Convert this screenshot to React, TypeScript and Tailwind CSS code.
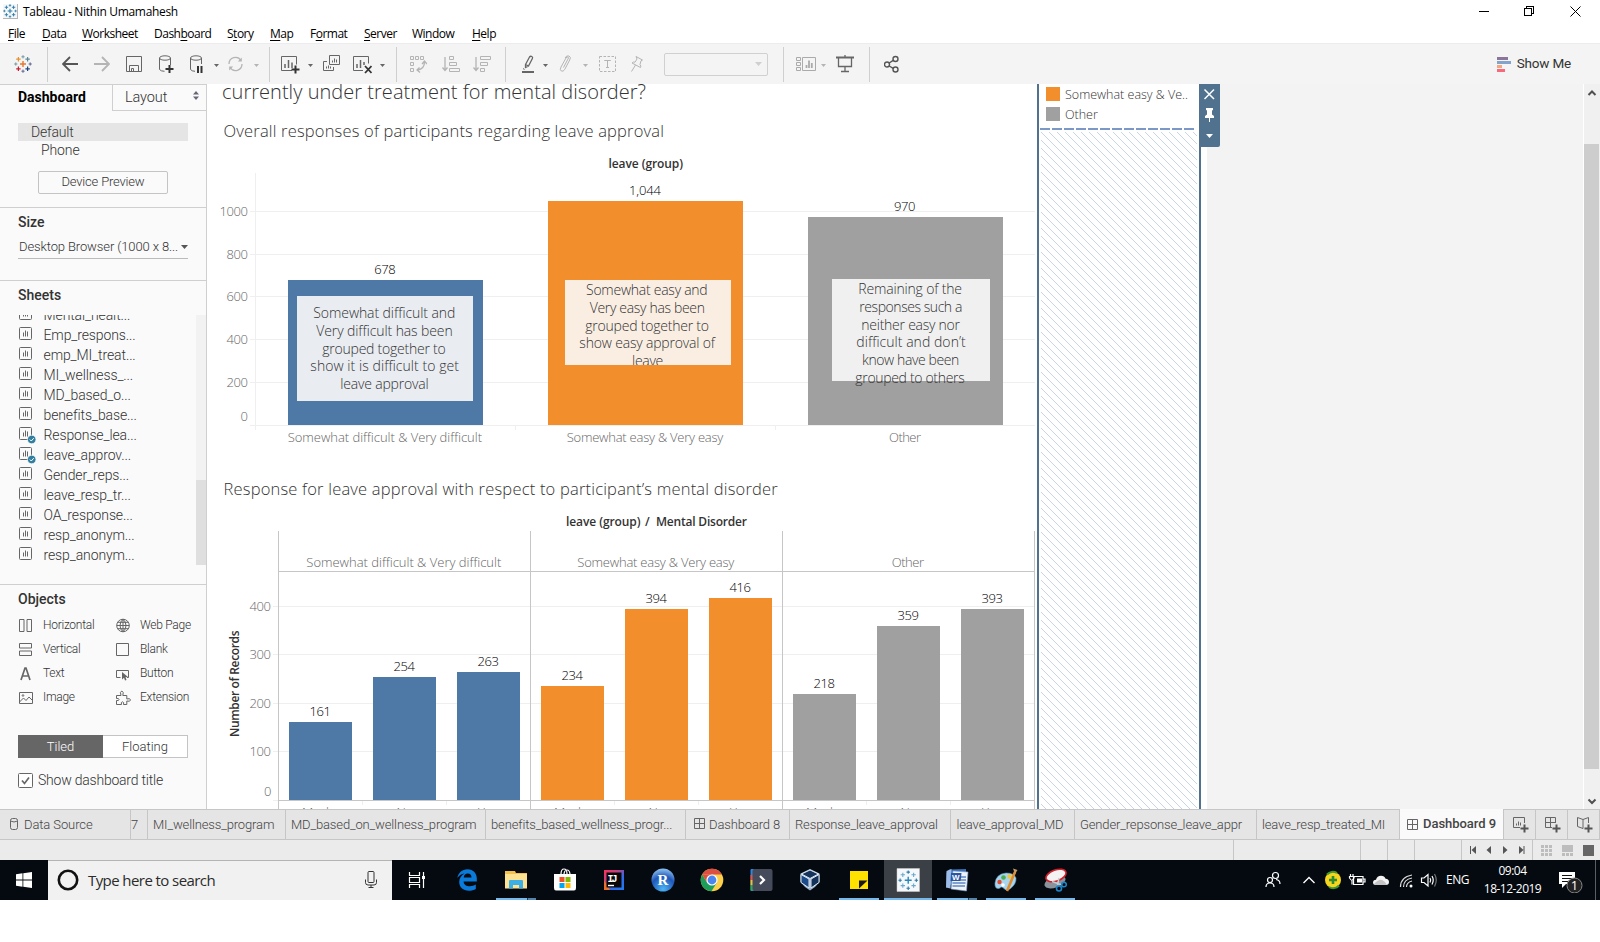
import type { ReactNode } from 'react'

const SEGOE = "font-['Open_Sans','Noto_Sans',sans-serif]"
const BOOK = "font-['Roboto','Liberation_Sans',sans-serif]"

/* ---------- title bar and menu ---------- */

const MENUS: { w: string; pre: string; key: string; post: string }[] = [
  { w: 'w-[18px]', pre: '', key: 'F', post: 'ile' },
  { w: 'w-[24px]', pre: '', key: 'D', post: 'ata' },
  { w: 'w-[56px]', pre: '', key: 'W', post: 'orksheet' },
  { w: 'w-[57px]', pre: 'Dash', key: 'b', post: 'oard' },
  { w: 'w-[27px]', pre: 'S', key: 't', post: 'ory' },
  { w: 'w-[24px]', pre: '', key: 'M', post: 'ap' },
  { w: 'w-[38px]', pre: 'F', key: 'o', post: 'rmat' },
  { w: 'w-[32px]', pre: '', key: 'S', post: 'erver' },
  { w: 'w-[44px]', pre: 'Wi', key: 'n', post: 'dow' },
  { w: 'w-[25px]', pre: '', key: 'H', post: 'elp' },
]

function Plus({ x, y, r, c, w = 1 }: { x: number; y: number; r: number; c: string; w?: number }) {
  return <path d={`M${x - r} ${y}h${2 * r}M${x} ${y - r}v${2 * r}`} stroke={c} strokeWidth={w} fill="none" />
}

function TableauMark({ size, mono }: { size: number; mono?: boolean }) {
  const c = (v: string) => (mono ? '#2f7ba6' : v)
  return (
    <svg width={size} height={size} viewBox="0 0 18 18">
      <Plus x={9} y={9} r={3} c={c('#e8762c')} w={1.4} />
      <Plus x={4.4} y={4.2} r={2.2} c={c('#e8912c')} w={1.2} />
      <Plus x={13.6} y={4.2} r={2.2} c={c('#5b879b')} w={1.2} />
      <Plus x={4.4} y={13.8} r={2.2} c={c('#c72035')} w={1.2} />
      <Plus x={13.6} y={13.8} r={2.2} c={c('#1f457e')} w={1.2} />
      <Plus x={9} y={1.8} r={1.6} c={c('#7099a6')} />
      <Plus x={1.8} y={9} r={1.6} c={c('#7099a6')} />
      <Plus x={16.2} y={9} r={1.6} c={c('#5c6692')} />
      <Plus x={9} y={16.2} r={1.6} c={c('#5c6692')} />
    </svg>
  )
}

function TitleBar() {
  return (
    <header className={`flex h-[43px] flex-col bg-white text-xs text-black ${SEGOE}`}>
      <div className="flex h-[24px] items-center">
        <div className="-mt-px ml-[3px] flex size-[15px] items-center justify-center border-r border-b border-[#b5b5b5] bg-[#f4f8fa]">
          <TableauMark size={14} mono />
        </div>
        <span className="ml-[5px] whitespace-nowrap tracking-[-0.32px]">Tableau - Nithin Umamahesh</span>
        <svg width="102" height="12" viewBox="0 0 102 12" className="mr-[19px] -mt-[3px] ml-auto" fill="none" stroke="#000" shapeRendering="crispEdges">
          <path d="M0 6.500h10" />
          <path d="M45.500 3.500h7v7h-7zM47.500 3.500v-2h7v7h-2" />
          <path d="M91.500 1.500l10 10M101.500 1.500l-10 10" shapeRendering="auto" />
        </svg>
      </div>
      <nav className="flex h-[19px] items-center gap-4 pl-2 tracking-[-0.5px]">
        {MENUS.map((m) => (
          <span key={m.pre + m.key + m.post} className={`${m.w} whitespace-nowrap`}>
            {m.pre}
            <span className="underline underline-offset-2">{m.key}</span>
            {m.post}
          </span>
        ))}
      </nav>
    </header>
  )
}

/* ---------- toolbar ---------- */

const DARK = '#666'
const PALE = '#b4b4b4'

function Ico({ w, h = 20, className, color = DARK, children }: { w: number; h?: number; className: string; color?: string; children: ReactNode }) {
  return (
    <svg width={w} height={h} viewBox={`0 0 ${w} ${h}`} className={`shrink-0 ${className}`} fill="none" stroke={color} strokeWidth={1}>
      {children}
    </svg>
  )
}

function Caret({ className, pale }: { className: string; pale?: boolean }) {
  return (
    <svg width="5" height="3" viewBox="0 0 5 3" className={`mt-[2px] shrink-0 ${className}`} fill={pale ? PALE : DARK}>
      <path d="M0 0h5L2.500 3z" />
    </svg>
  )
}

function Sep({ className }: { className: string }) {
  return <div className={`h-[35px] w-px shrink-0 bg-[#cfcfcf] ${className}`} />
}

function Toolbar() {
  return (
    <div className="flex h-[41px] items-center border-t border-[#ececec] bg-[#f4f4f4]">
      <div className="ml-[14px] size-[18px]">
        <TableauMark size={18} />
      </div>
      <Sep className="ml-[15px]" />
      <Ico w={16} className="ml-[14px]" color="#555">
        <path d="M16 10H1.500M8 3L1 10l7 7" strokeWidth={1.8} />
      </Ico>
      <Ico w={16} className="ml-[16px]" color={PALE}>
        <path d="M0 10h14.500M8 3l7 7-7 7" strokeWidth={1.8} />
      </Ico>
      <Ico w={16} className="ml-[16px]">
        <path d="M.5 2.500h15v15H.5zM3.500 17.500v-6h9v6M5.500 17.500v-3h2v3" />
      </Ico>
      <Ico w={15} className="ml-[17px]">
        <ellipse cx="6" cy="4" rx="5.500" ry="2.200" />
        <path d="M.5 4v11.500q1.500 1.800 5 1.800M11.500 4v7" />
        <path d="M6.500 15h8M10.500 11v8" stroke="#333" strokeWidth={2} />
      </Ico>
      <Ico w={13} className="ml-[16px]">
        <ellipse cx="6" cy="4" rx="5.500" ry="2.200" />
        <path d="M.5 4v11.500q1.500 1.800 4.500 1.800M11.500 4v6" />
        <path d="M8 12v7M11.500 12v7" stroke="#333" strokeWidth={2} />
      </Ico>
      <Caret className="ml-[11px]" />
      <Ico w={17} className="ml-[8px]" color={PALE}>
        <path d="M2 10a6.500 6.500 0 0 1 12-3.500M15 10a6.500 6.500 0 0 1-12 3.500" strokeWidth={1.300} />
        <path d="M14.800 3.500v4h-4zM2.200 16.500v-4h4z" fill={PALE} stroke="none" />
      </Ico>
      <Caret className="ml-[10px]" pale />
      <Sep className="ml-[10px]" />
      <Ico w={19} className="ml-[11px]">
        <path d="M11 16.500H.5v-14h15v8" />
        <path d="M4 14v-4M7.500 14V6M11 14V8.500" strokeWidth={1.500} />
        <path d="M10.500 15.500h8M14.500 11.500v8" stroke="#333" strokeWidth={2} />
      </Ico>
      <Caret className="ml-[8px]" />
      <Ico w={17} className="ml-[10px]">
        <path d="M6.500 1.500h10v9h-10zM4 7.500H.5v9h10v-3.500" />
        <path d="M9.500 8.500v-2M11.500 8.500v-4M13.500 8.500v-3M3.500 14.500v-2M5.500 14.500v-3M7.500 14.500v-2" />
      </Ico>
      <Ico w={19} className="ml-[13px]">
        <path d="M10 16.500H.5v-14h15v7" />
        <path d="M4 14v-4M7.500 14V6M11 11V8" strokeWidth={1.500} />
        <path d="M12 12l6.500 7M18.500 12L12 19" stroke="#333" strokeWidth={1.800} />
      </Ico>
      <Caret className="ml-[8px]" />
      <Sep className="ml-[11px]" />
      <Ico w={17} className="ml-[13px]" color={PALE}>
        <path d="M.5 2.500h3v3h-3zM5.500 2.500h3v3h-3zM10.500 2.500h3v3h-3zM.5 8.500h3v3h-3zM.5 14.500h3v3h-3z" />
        <path d="M14.500 8q0 7-7 8M12 10l2.500-3 2.500 3M9.500 13.500L7 16l3 2.500" strokeWidth={1.300} />
      </Ico>
      <Ico w={18} className="ml-[15px]" color={PALE}>
        <path d="M3 3v13M.5 13.500L3 16.500l2.500-3" strokeWidth={1.300} />
        <path d="M7.500 2.500h4v3h-4zM7.500 8.500h7v3h-7zM7.500 14.500h10v3h-10z" />
      </Ico>
      <Ico w={18} className="ml-[13px]" color={PALE}>
        <path d="M3 3v13M.5 13.500L3 16.500l2.500-3" strokeWidth={1.300} />
        <path d="M7.500 2.500h10v3h-10zM7.500 8.500h7v3h-7zM7.500 14.500h4v3h-4z" />
      </Ico>
      <Sep className="ml-[14px]" />
      <Ico w={13} className="ml-[16px]">
        <path d="M3.500 10.500L7.500 3q1-1.200 2.300-.5t.6 2L6.500 12l-3 1.500zM3.500 10.500l3 1.500" strokeWidth={1.300} />
        <path d="M0 18h12" strokeWidth={2} />
        <path d="M1 14.500l1.500 1" />
      </Ico>
      <Caret className="ml-[8px]" />
      <Ico w={13} className="ml-[11px]" color={PALE}>
        <path d="M4.500 13.500L9 5q1-1.500 0-2t-2 1L2 13q-1.500 3 .3 4t3.400-1.500l5-9.500Q12.500 3 10 2T6 4" />
      </Ico>
      <Caret className="ml-[11px]" pale />
      <Ico w={17} className="ml-[11px]" color={PALE}>
        <rect x=".5" y="2.500" width="16" height="15" strokeDasharray="2.500 1.500" />
        <path d="M5.500 7V6.500h6V7M8.500 6.500v7M7 13.500h3" />
      </Ico>
      <Ico w={14} className="ml-[14px]" color={PALE}>
        <path d="M6 2.500l6.500 3.500-1.500.800-1 3.700q1.500 1.500.5 3L2 9q1.500-1.500 3-.8l2-3.200zM5.500 11l-4 6.500" />
      </Ico>
      <div className="ml-[20px] flex h-[23px] w-[104px] shrink-0 items-center justify-end rounded-[2px] border border-[#d0d0d0] pr-[5px]">
        <svg width="7" height="4" viewBox="0 0 7 4" fill="#cfcfcf"><path d="M0 0h7L3.500 4z" /></svg>
      </div>
      <Sep className="ml-[15px]" />
      <Ico w={20} className="ml-[12px]" color="#aaa">
        <path d="M.5 3.500h4v3h-4zM.5 8.500h4v3h-4zM.5 13.500h4v3h-4zM6.500 3.500h13v13h-13z" />
        <path d="M10.500 14v-3M13 14V6.500M15.800 14V9" strokeWidth={1.800} />
      </Ico>
      <Caret className="ml-[5px]" pale />
      <Ico w={18} className="ml-[10px]">
        <path d="M0 3.500h18" strokeWidth={2} />
        <path d="M2.500 4v8.500h13V4M9 12.500v5M5 17.500h8M9 1v2" strokeWidth={1.300} />
      </Ico>
      <Sep className="ml-[15px]" />
      <Ico w={15} className="ml-[14px]" color="#555">
        <circle cx="3" cy="10.500" r="2.500" strokeWidth={1.400} />
        <circle cx="11.500" cy="5" r="2.500" strokeWidth={1.400} />
        <circle cx="11.500" cy="15.500" r="2.500" strokeWidth={1.400} />
        <path d="M5.200 9l4-2.600M5.200 12l4 2.300" strokeWidth={1.400} />
      </Ico>
      <svg width="14" height="15" viewBox="0 0 14 15" className="ml-auto shrink-0">
        <path d="M0 0h11v3H0z" fill="#8d7499" />
        <path d="M0 4h14v3H0z" fill="#83a3cc" />
        <path d="M0 8h5v3H0z" fill="#f4a582" />
        <path d="M0 12h8v3H0z" fill="#f8697c" />
      </svg>
      <span className={`mr-[29px] mb-0.5 ml-[6px] whitespace-nowrap text-[13.500px] tracking-[-0.2px] text-[#333] ${BOOK}`}>Show Me</span>
    </div>
  )
}

/* ---------- sidebar ---------- */

function SheetIcon({ used }: { used?: boolean }) {
  return (
    <svg width="17" height="18" viewBox="0 0 17 18" className="shrink-0 overflow-visible" fill="none" stroke="#666">
      <rect x=".5" y="1.500" width="12" height="12" rx="1" />
      <path d="M4.500 10.500v-4M6.500 10.500v-6M8.500 10.500v-5" />
      {used && (
        <>
          <circle cx="12.700" cy="13.500" r="4.300" fill="#327e9f" stroke="#fafafa" strokeWidth=".8" />
          <path d="M10.800 13.500l1.500 1.500 2.400-2.800" stroke="#fff" />
        </>
      )}
    </svg>
  )
}

const SHEETS: [string, boolean?][] = [
  ['Mental_healt...'],
  ['Emp_respons...'],
  ['emp_MI_treat...'],
  ['MI_wellness_...'],
  ['MD_based_o...'],
  ['benefits_base...'],
  ['Response_lea...', true],
  ['leave_approv...', true],
  ['Gender_reps...'],
  ['leave_resp_tr...'],
  ['OA_response...'],
  ['resp_anonym...'],
  ['resp_anonym...'],
]

const OBJECTS: [string, ReactNode, string, ReactNode][] = [
  [
    'Horizontal',
    <path d="M.5 1.500h4.500v12H.5zM8 1.500h4.500v12H8z" />,
    'Web Page',
    <path d="M7 1.200a6.300 6.300 0 1 0 0 12.600a6.300 6.300 0 0 0 0-12.600zM7 1.200q-3 2.500-3 6.300t3 6.300q3-2.500 3-6.300t-3-6.300zM7 1.200v12.600M.7 7.500h12.600M1.800 4.300h10.400M1.800 10.700h10.400" />,
  ],
  ['Vertical', <path d="M.5 1.500h12v4.500H.5zM.5 9h12v4.500H.5z" />, 'Blank', <path d="M.5 1.500h12v12H.5z" />],
  [
    'Text',
    <path d="M2 14L6 2h1l4 12M3.500 10h6" strokeWidth={1.700} />,
    'Button',
    <>
      <path d="M4.500 11.500h-4v-7h12v7h-1.500" />
      <path d="M6 6l6 5-2.500.300 1 2.700-1.500.5-1-2.700-2 1.700z" fill="#666" stroke="none" />
    </>,
  ],
  [
    'Image',
    <>
      <path d="M.5 2.500h13v11H.5zM.5 12l4-4 2.500 2.500 3-3.500 3.500 3.500" />
      <circle cx="4" cy="5.500" r=".8" />
    </>,
    'Extension',
    <path d="M.5 5.500h4.500q-1.500-4 .8-4.500 2.400.5 1 4.500h4v3.500q3.500-1.200 3.700 1-.2 2-3.700 1v3.500H7.500q.8-2.500-1-2.700-1.800.2-1 2.700H.5V10.500q2.500.5 2.500-1T.5 8.500z" />,
  ],
]

function Sidebar() {
  return (
    <aside className={`flex h-[725px] w-[207px] shrink-0 flex-col border-t border-r border-[#cfcfcf] bg-[#fafafa] font-light text-[#333] ${BOOK}`}>
      <div className="flex h-[26px] shrink-0">
        <div className="flex w-[112px] items-center pb-0.5 pl-[18px] text-sm font-bold text-black">Dashboard</div>
        <div className="flex flex-1 items-center justify-between border-b border-l border-[#cfcfcf] pr-[7px] pl-[12px] text-[14.500px] tracking-[-0.1px]">
          Layout
          <svg width="6" height="9" viewBox="0 0 6 9" fill="#667" className="-mt-1"><path d="M0 3.500L3 0l3 3.500zM0 5.500h6L3 9z" /></svg>
        </div>
      </div>
      <div className="mt-[12px] ml-[18px] flex h-[18px] w-[170px] shrink-0 items-center bg-[#e5e5e5] pl-[13px] text-sm tracking-[-0.2px]">Default</div>
      <div className="ml-[41px] flex h-[18px] shrink-0 items-center text-sm tracking-[-0.1px]">Phone</div>
      <div className="mt-[12px] ml-[38px] flex h-[23px] w-[130px] shrink-0 items-center justify-center rounded-[2px] border border-[#c4c4c4] pb-0.5 text-[13px] tracking-[-0.18px]">
        Device Preview
      </div>
      <div className="mt-[13px] h-px shrink-0 bg-[#cfcfcf]" />
      <div className="mt-[4px] ml-[18px] h-[20px] shrink-0 text-sm leading-5 font-medium">Size</div>
      <div className="mt-[5px] ml-[18px] flex h-[22px] w-[170px] shrink-0 items-center justify-between border-b border-[#bbb] pb-px pl-px text-[13px] tracking-[-0.12px]">
        Desktop Browser (1000 x 8...
        <svg width="7" height="4" viewBox="0 0 7 4" fill="#555"><path d="M0 0h7L3.500 4z" /></svg>
      </div>
      <div className="mt-[21px] h-px shrink-0 bg-[#cfcfcf]" />
      <div className="mt-[4px] ml-[18px] h-[20px] shrink-0 text-sm leading-5 font-medium">Sheets</div>
      <div className="mt-[10px] flex h-[250px] shrink-0 overflow-hidden">
        <ul className="-mt-[10px] flex-1 pl-[19px]">
          {SHEETS.map(([name, used], i) => (
            <li key={i} className="flex h-[20px] items-center text-sm tracking-[-0.11px]">
              <span className="w-[24.500px]"><SheetIcon used={used} /></span>
              {name}
            </li>
          ))}
        </ul>
        <div className="flex w-[10px] flex-col justify-end bg-[#f2f2f2]">
          <div className="h-[85px] bg-[#dfdfdf]" />
        </div>
      </div>
      <div className="mt-[19px] h-px shrink-0 bg-[#cfcfcf]" />
      <div className="mt-[4px] ml-[18px] h-[20px] shrink-0 text-sm leading-5 font-medium">Objects</div>
      <div className="mt-[4px] ml-[19px] shrink-0 text-xs">
        {OBJECTS.map(([a, ia, b, ib]) => (
          <div key={a} className="flex h-[24px] items-center tracking-[-0.27px]">
            <svg width="14" height="15" viewBox="0 0 14 15" fill="none" stroke="#666">{ia}</svg>
            <span className="ml-[10px] w-[73px]">{a}</span>
            <svg width="15" height="15" viewBox="0 0 15 15" fill="none" stroke="#666" className="overflow-visible">{ib}</svg>
            <span className="ml-[9px] whitespace-nowrap">{b}</span>
          </div>
        ))}
      </div>
      <div className="mt-[26px] ml-[18px] flex h-[23px] w-[170px] shrink-0 text-[13px]">
        <div className="flex w-[85px] items-center justify-center bg-[#666] text-white">Tiled</div>
        <div className="flex flex-1 items-center justify-center border border-l-0 border-[#c4c4c4] bg-white">Floating</div>
      </div>
      <div className="mt-[12px] ml-[18px] flex h-[20px] shrink-0 items-center text-sm tracking-[-0.22px]">
        <svg width="15" height="15" viewBox="0 0 15 15" fill="#fff" stroke="#666">
          <rect x=".5" y=".5" width="14" height="14" rx="1" />
          <path d="M4 7.500l2.500 3 4.500-6" fill="none" strokeWidth={1.700} />
        </svg>
        <span className="ml-[5px] whitespace-nowrap">Show dashboard title</span>
      </div>
    </aside>
  )
}

/* ---------- dashboard canvas ---------- */

/* Chart text fitted between x1 and x2 on baseline y. */
function T({ x1, x2, y, s = 13, c = '#666', w = 350, children }: { x1: number; x2: number; y: number; s?: number; c?: string; w?: number; children: string }) {
  return (
    <text x={x1} y={y} textLength={x2 - x1} fontSize={s} fill={c} fontWeight={w}>
      {children}
    </text>
  )
}

const BLUE = '#4e79a7'
const ORANGE = '#f28e2b'
const GREY = '#a0a0a0'

const TOTALS: [number, number, string, string, number, number][] = [
  [288, 280, BLUE, '678', 374.3, 395.7],
  [548, 201, ORANGE, '1,044', 629, 661],
  [808, 217, GREY, '970', 894, 915.3],
]

const SPLIT: [number, number, string, number][] = [
  [289, 722, BLUE, 161],
  [373, 677, BLUE, 254],
  [457, 672, BLUE, 263],
  [541, 686, ORANGE, 234],
  [625, 609, ORANGE, 394],
  [709, 598, ORANGE, 416],
  [793, 694, GREY, 218],
  [877, 626, GREY, 359],
  [961, 609, GREY, 393],
]

const NOTES: [string, number, number, number][] = [
  ['Somewhat difficult and', 313.3, 455.3, 317.5],
  ['Very difficult has been', 316.3, 452.7, 335.5],
  ['grouped together to', 322.3, 445.7, 353.5],
  ['show it is difficult to get', 310.3, 459, 370.5],
  ['leave approval', 340.3, 428.7, 388.5],
  ['Somewhat easy and', 586, 707.7, 294.5],
  ['Very easy has been', 589.7, 705, 312.5],
  ['grouped together to', 585.3, 709, 330.5],
  ['show easy approval of', 579.3, 715, 347.5],
  ['Remaining of the', 858.3, 962, 293.5],
  ['responses such a', 859.3, 962.3, 311.5],
  ['neither easy nor', 861.3, 960, 329.5],
  ['difficult and don’t', 856.3, 965.7, 346.5],
  ['know have been', 862, 959.3, 364.5],
  ['grouped to others', 855.3, 964.7, 382.5],
]

function Charts() {
  return (
    <svg width="830" height="725" viewBox="207 84 830 725" className="shrink-0 font-['Open_Sans','Noto_Sans',sans-serif]">
      <T x1={222} x2={646} y={98.500} s={20} c="#333">currently under treatment for mental disorder?</T>
      <T x1={223.500} x2={664} y={137} s={16.500} c="#333">Overall responses of participants regarding leave approval</T>
      <T x1={608.500} x2={683} y={168} s={12} c="#333" w={570}>leave (group)</T>

      <g stroke="#efefef" shapeRendering="crispEdges">
        <path d="M250 211.500h785M250 254.500h785M250 296.500h785M250 339.500h785M250 382.500h785M250 425.500h785" />
        <path d="M255.500 173v257M515.500 425v5M775.500 425v5" />
      </g>
      <T x1={219.500} x2={248} y={216}>1000</T>
      <T x1={226.500} x2={248} y={259}>800</T>
      <T x1={226.500} x2={248} y={301}>600</T>
      <T x1={226.500} x2={248} y={344}>400</T>
      <T x1={226.500} x2={248} y={387}>200</T>
      <T x1={240.500} x2={248} y={421}>0</T>
      {TOTALS.map(([x, y, c, label, l, r]) => (
        <g key={label}>
          <rect x={x} y={y} width={195} height={425 - y} fill={c} />
          <T x1={l} x2={r} y={y - 6} c="#000">{label}</T>
        </g>
      ))}
      <rect x="297" y="296" width="176" height="105" fill="#e9ecf1" />
      <rect x="565" y="280" width="166" height="85" fill="#faeee3" />
      <rect x="832" y="279" width="158" height="102" fill="#f0f0f0" />
      {NOTES.map(([t, l, r, y]) => (
        <T key={t + l} x1={l} x2={r} y={y} s={14} c="#333">{t}</T>
      ))}
      <svg x="565" y="350" width="166" height="15" viewBox="565 350 166 15">
        <T x1={632} x2={663.300} y={365.500} s={14} c="#333">leave</T>
      </svg>
      <T x1={287.700} x2={482} y={442}>Somewhat difficult &amp; Very difficult</T>
      <T x1={566.700} x2={723.300} y={442}>Somewhat easy &amp; Very easy</T>
      <T x1={889} x2={921} y={442}>Other</T>

      <T x1={223.500} x2={777.700} y={495} s={16.500} c="#333">Response for leave approval with respect to participant’s mental disorder</T>
      <T x1={566} x2={640.500} y={526} s={12} c="#333" w={570}>leave (group)</T>
      <T x1={645} x2={651} y={526} s={12} c="#333" w={570}>/</T>
      <T x1={656} x2={747} y={526} s={12} c="#333" w={570}>Mental Disorder</T>
      <path d="M273 606.500h761M273 654.500h761M273 703.500h761M273 751.500h761M273 800.500h6M362.500 800v5M446.500 800v5M614.500 800v5M698.500 800v5M866.500 800v5M950.500 800v5" stroke="#efefef" shapeRendering="crispEdges" />
      {SPLIT.map(([x, y, c, v]) => (
        <g key={x}>
          <rect x={x} y={y} width={63} height={800 - y} fill={c} />
          <T x1={x + 20.500} x2={x + 42} y={y - 6} c="#000">{String(v)}</T>
        </g>
      ))}
      <path d="M278.500 531v278M530.500 531v278M782.500 531v278M1034.500 531v278M278 571.500h757M278 800.500h757" stroke="#c6c6c6" fill="none" shapeRendering="crispEdges" />
      <T x1={306.300} x2={501.300} y={567}>Somewhat difficult &amp; Very difficult</T>
      <T x1={577.300} x2={734.300} y={567}>Somewhat easy &amp; Very easy</T>
      <T x1={891.700} x2={924} y={567}>Other</T>
      <T x1={249.500} x2={271} y={611}>400</T>
      <T x1={249.500} x2={271} y={659}>300</T>
      <T x1={249.500} x2={271} y={708}>200</T>
      <T x1={249.500} x2={271} y={756}>100</T>
      <T x1={264} x2={271} y={796}>0</T>
      <g transform="rotate(-90 239 737)">
        <T x1={239} x2={345.500} y={737} s={12} c="#333" w={570}>Number of Records</T>
      </g>
      {[0, 252, 504].map((dx) => (
        <g key={dx}>
          <T x1={302 + dx} x2={341 + dx} y={817}>Maybe</T>
          <T x1={396.500 + dx} x2={413 + dx} y={817}>No</T>
          <T x1={478 + dx} x2={499 + dx} y={817}>Yes</T>
        </g>
      ))}
    </svg>
  )
}

function LegendColumn() {
  return (
    <div className="flex h-full w-[164px] shrink-0 flex-col border-x-2 border-[#51728f] bg-white text-[13px] font-[350] text-[#333] font-['Open_Sans','Noto_Sans',sans-serif]">
      <div className="mt-[3px] ml-[7px] flex h-[14px] items-center">
        <span className="size-[14px] bg-[#f28e2b]" />
        <span className="mt-[2px] ml-[5px] text-[12.500px] whitespace-nowrap">Somewhat easy &amp; Ve..</span>
      </div>
      <div className="mt-[6px] ml-[7px] flex h-[14px] items-center">
        <span className="size-[14px] bg-[#a0a0a0]" />
        <span className="mt-[2px] ml-[5px] text-[12.500px]">Other</span>
      </div>
      <svg width="156" height="2" viewBox="0 0 156 2" className="mt-[7px] ml-px shrink-0">
        <path d="M0 1h154" stroke="#7b98c6" strokeWidth={2} strokeDasharray="10 2" />
      </svg>
      <svg width="156" height="677" viewBox="1041 132 156 677" className="mt-[2px] ml-[2px] shrink-0">
        <defs>
          <pattern id="hatch" patternUnits="userSpaceOnUse" x="1041" y="132" width="8" height="8">
            <path d="M-1-1l10 10M-1 7l2 2M7-1l2 2" stroke="#b3c1dc" strokeWidth=".7" />
          </pattern>
        </defs>
        <path d="M1041 132h156v677h-156z" fill="url(#hatch)" />
      </svg>
    </div>
  )
}

function Canvas() {
  return (
    <main className="flex h-[725px] flex-1 overflow-hidden bg-white">
      <Charts />
      <LegendColumn />
      <div className="relative w-[6px] shrink-0 bg-white">
        <div className="absolute top-0 left-0 h-[63px] w-[19px] rounded-br-[2px] bg-[#51728f]">
          <svg width="19" height="63" viewBox="0 0 19 63" fill="none" stroke="#fff">
            <path d="M3.500 5.500l9.500 9.500M13 5.500l-9.500 9.500" strokeWidth={1.500} />
            <path d="M5 24h7v2l-1 .500v4l2 1.500v2H4v-2l2-1.500v-4l-1-.500zM8 34h1v4H8z" fill="#fff" stroke="none" />
            <path d="M5 50h7l-3.500 4z" fill="#fff" stroke="none" />
          </svg>
        </div>
      </div>
      <div className="flex-1 bg-[#f3f3f3]" />
      <div className="flex w-[17px] shrink-0 flex-col items-center border-l border-white bg-[#f0f0f0] pr-px">
        <svg width="16" height="60" viewBox="0 0 16 60" className="shrink-0">
          <path d="M4.500 11L8 7.500l3.500 3.500" stroke="#505050" strokeWidth={2} fill="none" />
        </svg>
        <div className="h-[625px] w-[15px] shrink-0 bg-[#cdcdcd]" />
        <svg width="16" height="40" viewBox="0 0 16 40" className="shrink-0">
          <path d="M4.500 30.500L8 34l3.500-3.500" stroke="#505050" strokeWidth={2} fill="none" />
        </svg>
      </div>
    </main>
  )
}

/* ---------- sheet tabs and status bar ---------- */

function GridIcon({ size = 11 }: { size?: number }) {
  return (
    <svg width={size} height={size} viewBox="0 0 11 11" fill="none" stroke="#666" className="shrink-0">
      <path d="M.5.5h10v10H.5zM5.500 0v11M0 5.500h11" />
    </svg>
  )
}

const TABS: [string, string][] = [
  ['w-[138px] pl-[5px]', 'MI_wellness_program'],
  ['w-[199.500px] pl-[5px]', 'MD_based_on_wellness_program'],
  ['w-[200.500px] pl-[5.500px]', 'benefits_based_wellness_progr...'],
  ['w-[104px] pl-[7.500px]', 'Dashboard 8'],
  ['w-[161px] pl-[5px]', 'Response_leave_approval'],
  ['w-[124px] pl-[5.500px]', 'leave_approval_MD'],
  ['w-[182px] pl-[5px]', 'Gender_repsonse_leave_appr'],
  ['w-[143px] pl-[5px]', 'leave_resp_treated_MI'],
]

function AddTab({ className, children }: { className: string; children: ReactNode }) {
  return (
    <div className={`flex h-full shrink-0 items-center border-r border-[#c6c6c6] pl-[9px] ${className}`}>
      <svg width="16" height="16" viewBox="0 0 16 16" fill="none" stroke="#666" className="mt-px">
        {children}
        <path d="M7.500 11.500h8M11.500 7.500v8" stroke="#555" strokeWidth={2} />
      </svg>
    </div>
  )
}

function SheetTabs() {
  return (
    <div className={`flex h-[31px] items-center border-y border-[#c6c6c6] bg-[#e5e5e5] text-[13px] font-light whitespace-nowrap text-[#444] ${BOOK}`}>
      <div className="flex h-full w-[131px] shrink-0 items-center border-r border-[#c6c6c6] pl-[10px]">
        <svg width="8" height="12" viewBox="0 0 8 12" fill="none" stroke="#666" className="-mt-0.5">
          <rect x=".5" y=".5" width="7" height="11" rx="2" />
          <path d="M.5 3q3.500 2 7 0" />
        </svg>
        <span className="ml-[6px] tracking-[-0.1px]">Data Source</span>
      </div>
      <div className="flex h-full w-[17px] shrink-0 items-center border-r border-[#c6c6c6]">7</div>
      {TABS.map(([cls, name]) => (
        <div key={name} className={`flex h-full shrink-0 items-center overflow-hidden border-r border-[#c6c6c6] tracking-[-0.14px] ${cls}`}>
          {name === 'Dashboard 8' && <span className="mr-[4.500px] -mt-0.5"><GridIcon /></span>}
          {name}
        </div>
      ))}
      <div className="-mt-px flex h-[30px] w-[104px] shrink-0 items-center border-r border-[#c6c6c6] bg-[#fafafa] pl-[7px] font-medium tracking-[-0.05px] text-[#444]">
        <span className="mr-[5px]"><GridIcon /></span>
        Dashboard 9
      </div>
      <AddTab className="w-[32px]">
        <path d="M7 10.500H.5v-10h11V6M3.500 8.500v-2M5.500 8.500v-4M7.500 8.500v-3" />
      </AddTab>
      <AddTab className="w-[32px]">
        <path d="M7 10.500H.5v-10h10V6M5.500.5v10M.5 5.500h10" />
      </AddTab>
      <AddTab className="w-[32px]">
        <path d="M6 2.500L.5.500v9l5.500 2zM6 2.500l5.500-2V6" />
      </AddTab>
    </div>
  )
}

function StatusBar() {
  return (
    <div className="flex h-[20px] justify-end bg-[#ebebeb]">
      <div className="w-[127px] border-l border-[#c6c6c6]" />
      <div className="w-[27px] border-l border-[#c6c6c6]" />
      <div className="w-[27px] border-l border-[#c6c6c6]" />
      <div className="w-[47px] border-l border-[#c6c6c6]" />
      <div className="flex w-[71px] items-center border-l border-[#c6c6c6]">
        <svg width="70" height="8" viewBox="0 0 70 8" fill="#555">
          <path d="M8 0h1v8H8zM14 0v8l-4.500-4zM29 0v8l-4.500-4zM41 0v8l4.500-4zM57 0v8l4.500-4zM61.500 0h1v8h-1z" />
        </svg>
      </div>
      <div className="flex w-[68px] items-center border-l border-[#c6c6c6] pl-[8px]">
        <svg width="54" height="11" viewBox="0 0 54 11" fill="#bdbdbd">
          <path d="M0 0h3v3H0zM4 0h3v3H4zM8 0h3v3H8zM0 4h3v3H0zM4 4h3v3H4zM8 4h3v3H8zM0 8h3v3H0zM4 8h3v3H4zM8 8h3v3H8z" />
          <path d="M21 0h11v7H21zM21 8h3v3h-3zM25 8h3v3h-3zM29 8h3v3h-3z" />
          <path d="M42 0h11v11H42z" fill="#666" />
        </svg>
      </div>
    </div>
  )
}

/* ---------- taskbar ---------- */

function App24({ children }: { children: ReactNode }) {
  return (
    <svg width="24" height="24" viewBox="0 0 24 24" fill="none">
      {children}
    </svg>
  )
}

const TaskView = (
  <App24>
    <path d="M3.500 4v3.500h10V4M3.500 20v-3.500h10V20M3.500 9.500h10v5h-10zM17.500 4v16" stroke="#fff" strokeWidth={1.200} />
    <path d="M16 8h3v3h-3z" fill="#fff" />
  </App24>
)

const Edge = (
  <App24>
    <path d="M2.300 10.600C3 5 7 1.300 12.500 1.300c6 0 9.300 4.400 9.300 9.300v2.800H8.600c.2 3.400 3 4.900 6.200 4.900 2.200 0 4.200-.6 6-1.700v4.300c-1.900 1.200-4.300 1.800-7 1.800-5.800 0-9.600-3.500-9.600-8.700 0-4 2.300-7 5.300-8.600-3.200.4-5.600 2.200-7.200 4.500zM8.700 9.500h7.800c0-2.300-1.400-3.900-3.700-3.900S9 7.200 8.700 9.500z" fill="#0a7bdb" />
  </App24>
)

const Explorer = (
  <App24>
    <path d="M1 3h10l1 2h11v15H1z" fill="#f4c04e" />
    <path d="M1 6h22v14.500H1z" fill="#fde291" />
    <path d="M5 20.500V13q0-1 1-1h12q1 0 1 1v7.500h-4V17h-6v3.500z" fill="#3cb0e5" />
  </App24>
)

const Store = (
  <App24>
    <path d="M8 6q0-5 3-5t3 5M11 6q.500-4 3-4t3 4" stroke="#fff" strokeWidth={1.200} />
    <path d="M1 6h22v14q0 2.500-2 2.500H3q-2 0-2-2.500z" fill="#fff" />
    <path d="M6.500 9h5v5h-5z" fill="#f25022" />
    <path d="M12.500 9h5v5h-5z" fill="#7fba00" />
    <path d="M6.500 15h5v5h-5z" fill="#00a4ef" />
    <path d="M12.500 15h5v5h-5z" fill="#ffb900" />
  </App24>
)

const Idea = (
  <App24>
    <defs>
      <linearGradient id="ij" x1="0" y1="0" x2="1" y2="1">
        <stop offset="0" stopColor="#fe315d" />
        <stop offset=".35" stopColor="#c2417e" />
        <stop offset=".65" stopColor="#2f6bee" />
        <stop offset="1" stopColor="#1e7cf0" />
      </linearGradient>
    </defs>
    <path d="M2 2h20v20H2z" fill="url(#ij)" />
    <path d="M2 12v10h6z" fill="#e8722c" />
    <path d="M4.500 4.500h15v15h-15z" fill="#080808" />
    <path d="M6 17.500h6" stroke="#fff" strokeWidth={1.400} />
    <text x="5.500" y="13.500" fill="#fff" fontSize="10" fontWeight="700" fontFamily="Liberation Mono" textLength="10">IJ</text>
  </App24>
)

const RStudio = (
  <App24>
    <defs>
      <radialGradient id="rs" cx=".5" cy=".9" r=".9">
        <stop offset="0" stopColor="#4ab5f5" />
        <stop offset=".6" stopColor="#1f56b8" />
        <stop offset="1" stopColor="#8fc3f2" />
      </radialGradient>
    </defs>
    <circle cx="12" cy="12" r="11.500" fill="url(#rs)" />
    <text x="12" y="17" textAnchor="middle" fill="#fff" fontSize="15" fontWeight="700" fontFamily="Liberation Serif">R</text>
  </App24>
)

const Chrome = (
  <App24>
    <circle cx="12" cy="12" r="11.300" fill="#fcd04b" />
    <path d="M2.200 6.400A11.300 11.300 0 0 1 21.800 6.400H12z" fill="#dd4f43" />
    <path d="M2.200 6.400A11.300 11.300 0 0 0 11.500 23.300L16.800 14.800 12 17 7.200 14.800z" fill="#1c9e5b" />
    <path d="M2.200 6.400L7.200 14.800 12 6.400z" fill="#dd4f43" />
    <circle cx="12" cy="12" r="5.600" fill="#fff" />
    <circle cx="12" cy="12" r="4.400" fill="#4a86ee" />
  </App24>
)

const Prompt = (
  <App24>
    <path d="M1.500 2q0-1 1-1H5v22H2.500q-1 0-1-1z" fill="#2f86e0" />
    <path d="M1.500 7h2.500v5H1.500z" fill="#e9543f" />
    <path d="M1.500 12h2.500v5H1.500z" fill="#f0c030" />
    <path d="M1.500 17h2.500v5.500H1.500z" fill="#35a852" />
    <rect x="3.500" y="1" width="20" height="22" rx="2" fill="#464b5c" />
    <path d="M11 8l4 4-4 4" stroke="#fff" strokeWidth={2.200} />
  </App24>
)

const VBox = (
  <App24>
    <path d="M12 1l9.500 4.500v8.500L17 19l-5 3.500L7 19l-4.500-5V5.500z" fill="#9db4cc" />
    <path d="M12 2l8.500 4-8.500 4.500L3.500 6z" fill="#16335c" stroke="#dfe9f3" />
    <path d="M3 6.500l8 4.500v9L3 14.500z" fill="#1d4b8a" stroke="#dfe9f3" />
    <path d="M21 6.500L13 11v9l8-5.500z" fill="#14315a" stroke="#dfe9f3" />
  </App24>
)

const Sticky = (
  <App24>
    <path d="M3 3h18v18H3z" fill="#ffe200" />
    <path d="M12 12.500h8.500L12 20.500z" fill="#1a1a1a" />
  </App24>
)

const TableauApp = (
  <App24>
    <path d="M1 .500h22.500v23H1z" fill="#f4f8fa" stroke="#ccc" strokeWidth=".5" />
    <g transform="translate(2.500 2.500) scale(1.080)">
      <Plus x={9} y={9} r={3.200} c="#2a86b8" w={1.300} />
      <Plus x={4} y={4} r={2} c="#6ba8cc" />
      <Plus x={14} y={4} r={2} c="#6ba8cc" />
      <Plus x={4} y={14} r={2} c="#6ba8cc" />
      <Plus x={14} y={14} r={2} c="#6ba8cc" />
      <Plus x={9} y={1.500} r={1.600} c="#2a7aa8" />
      <Plus x={1.500} y={9} r={1.600} c="#2a7aa8" />
      <Plus x={16.500} y={9} r={1.600} c="#2a7aa8" />
      <Plus x={9} y={16.500} r={1.600} c="#2a7aa8" />
    </g>
  </App24>
)

const Word = (
  <App24>
    <path d="M4 1.500l17-.5v4L1.500 20V5z" fill="#3c6fb5" />
    <path d="M8 3l15 1-1.500 19L6 21z" fill="#eef3fa" stroke="#7a9ccb" strokeWidth=".6" />
    <path d="M16 9h5M16 12h5M7.500 15h13M7.500 18h12.500" stroke="#5c86c4" strokeWidth={1.300} />
    <path d="M1.500 3l5-2-1 19.500-4.500-1z" fill="#9dbde6" />
    <path d="M6 5h10.500l-.8 8H5.500z" fill="#2a57a4" />
    <text x="7" y="12" fill="#fff" fontSize="8" fontWeight="700" fontFamily="Liberation Sans">W</text>
  </App24>
)

const Paint = (
  <App24>
    <path d="M1 15q1-9 11-10 8 0 10 5 .500 6-6 11-4 2.500-6-.5t-5 0Q.500 21 1 15z" fill="#a9d4ee" stroke="#5f9ec4" strokeWidth=".6" />
    <circle cx="5.500" cy="14" r="2.200" fill="#e2492f" />
    <circle cx="9.500" cy="9.500" r="2.300" fill="#4cae4c" />
    <circle cx="15.500" cy="8.500" r="2.200" fill="#f0c53a" />
    <circle cx="9" cy="17" r="1.800" fill="#fff" />
    <path d="M21 4L13 23" stroke="#e08a2e" strokeWidth={2.600} />
    <path d="M19 .500l4.500 1.500-2.500 4z" fill="#c99a66" />
  </App24>
)

const Snip = (
  <App24>
    <ellipse cx="12" cy="14" rx="11" ry="5.500" fill="#8a939b" transform="rotate(-20 12 14)" />
    <ellipse cx="13" cy="7.500" rx="10.500" ry="5.500" fill="#f3f3f3" stroke="#d3202a" strokeWidth={1.600} transform="rotate(-20 13 7.500)" />
    <path d="M9 13.500l10 3.500M16 10l-1.500 7" stroke="#c4ccd2" strokeWidth={1.500} />
    <circle cx="16" cy="20.500" r="2.500" stroke="#1b86c9" strokeWidth={1.600} />
    <circle cx="21" cy="16.500" r="2.300" stroke="#1b86c9" strokeWidth={1.600} />
  </App24>
)

const APPS: { id: string; icon: ReactNode; open?: boolean; multi?: boolean; active?: boolean }[] = [
  { id: 'view', icon: TaskView },
  { id: 'edge', icon: Edge },
  { id: 'explorer', icon: Explorer, open: true, multi: true },
  { id: 'store', icon: Store },
  { id: 'idea', icon: Idea },
  { id: 'rstudio', icon: RStudio },
  { id: 'chrome', icon: Chrome },
  { id: 'prompt', icon: Prompt },
  { id: 'vbox', icon: VBox },
  { id: 'sticky', icon: Sticky, open: true },
  { id: 'tableau', icon: TableauApp, open: true, active: true },
  { id: 'word', icon: Word, open: true, multi: true },
  { id: 'paint', icon: Paint, open: true },
  { id: 'snip', icon: Snip, open: true },
]

function Taskbar() {
  return (
    <footer className={`flex h-[40px] bg-[#050a10] text-xs text-white ${SEGOE}`}>
      <div className="flex w-[48px] items-center justify-center">
        <svg width="16" height="16" viewBox="0 0 16 16" fill="#fff">
          <path d="M0 2.200l6.500-.9v6.300H0zM7.300 1.200L16 0v7.600H7.300zM0 8.400h6.500v6.300L0 13.800zM7.300 8.400H16V16l-8.700-1.200z" />
        </svg>
      </div>
      <div className="flex w-[344px] items-center border-t border-[#b4b4b4] bg-[#f1f1f1] pb-px pl-[9px] text-[#2b2b2b]">
        <svg width="22" height="22" viewBox="0 0 22 22"><circle cx="11" cy="11" r="9.200" fill="none" stroke="#111" strokeWidth={2.600} /></svg>
        <span className="ml-[9px] pb-px text-[15px] tracking-[-0.58px]">Type here to search</span>
        <svg width="12" height="18" viewBox="0 0 12 18" className="mr-[15px] ml-auto" fill="none" stroke="#333">
          <rect x="3" y=".5" width="6" height="11" rx="1" />
          <path d="M.5 8.500v3q0 2.500 2.500 2.500h6q2.500 0 2.500-2.500v-3M6 14v3M3.500 16.500h5" />
        </svg>
      </div>
      <div className="ml-[2px] flex">
        {APPS.map((a) => (
          <div key={a.id} className={`mr-px flex w-[48px] flex-col items-center pt-2 ${a.active ? 'bg-[#3b4046]' : ''}`}>
            {a.icon}
            {a.open && (
              <div className={`mt-[6px] flex h-[2px] ${a.active ? 'w-[48px]' : 'w-[40px]'} bg-[#76b9ed]`}>
                {a.multi && <div className="ml-auto h-full w-[9px] border-l border-[#1d3a52] bg-[#5384ab]" />}
              </div>
            )}
          </div>
        ))}
      </div>
      <div className="ml-auto flex items-center">
        <svg width="172" height="24" viewBox="1265 868 172 24" fill="none" stroke="#fff" strokeWidth={1.200}>
          <circle cx="1275.500" cy="875.500" r="3" />
          <circle cx="1270" cy="880" r="2.500" />
          <path d="M1266 887q0-4 4-4t4 4M1276 879.500q4 .500 4 4.500" />
          <path d="M1303.500 883l5.500-5.500 5.500 5.500" strokeWidth={1.400} />
          <circle cx="1333" cy="880" r="8" fill="#f7d51d" stroke="none" />
          <path d="M1327 874.500a8 8 0 0 1 10-1.500M1339 885.500a8 8 0 0 1-10 1.500" stroke="#3c9a36" strokeWidth={2} />
          <path d="M1333 876v8M1329 880h8" stroke="#2e8b2e" strokeWidth={2.600} />
          <path d="M1353.500 876.500h9.500v8h-9.500zM1363.500 879h1.500v3h-1.500" />
          <path d="M1357 878.500h5v4h-5z" fill="#fff" stroke="none" />
          <path d="M1350.500 874v2M1353 874v2M1349.500 876.500h4.500v1.500q-2 2.500-2.300 2.500t-2.200-2.500zM1352 880.500v4" />
          <path d="M1376 885q-3 0-3-2.500t3-2.800q1-4 5-4 3.500 0 4.600 3 3.400.300 3.400 3.300t-3 3z" fill="#f3f3f3" stroke="none" />
          <path d="M1374 884q5-5 8-4t5 5h-11z" fill="#c4c4c4" stroke="none" />
          <path d="M1400.500 887q0-10 11.500-12M1403.500 887q0-7.500 8.500-9M1406.500 887q0-4.500 5.500-6" stroke="#ddd" />
          <circle cx="1411" cy="886" r="1.500" fill="#fff" stroke="none" />
          <path d="M1421.500 878v4.500h2.500l4 3.500v-11.500l-4 3.500zM1430 878q1.500 2 0 4.500" />
          <path d="M1432 876q2.500 4 0 8.500" />
          <path d="M1434.500 874q3.500 6 0 12.500" stroke="#777" />
        </svg>
        <span className="ml-[9px] w-[24px] tracking-[-0.5px]">ENG</span>
        <div className="ml-[14px] flex w-[57px] flex-col items-center leading-[18px] tracking-[-0.52px] whitespace-nowrap">
          <span>09:04</span>
          <span>18-12-2019</span>
        </div>
        <svg width="26" height="26" viewBox="0 0 26 26" className="ml-[17px]">
          <path d="M1 5h16v12H8l-4 4v-4H1z" fill="#fff" />
          <path d="M4 8.500h10M4 11.500h10M4 14.500h6" stroke="#111" />
          <circle cx="16.500" cy="18.500" r="7.500" fill="#222" stroke="#888" />
          <text x="16.500" y="23" fill="#fff" fontSize="13" textAnchor="middle">1</text>
        </svg>
        <div className="mr-[4px] ml-[11px] h-[40px] w-px bg-[#5a5f64]" />
      </div>
    </footer>
  )
}

export default function App() {
  return (
    <div className="flex h-[942px] w-[1600px] flex-col overflow-hidden bg-white">
      <TitleBar />
      <Toolbar />
      <div className="flex h-[725px]">
        <Sidebar />
        <Canvas />
      </div>
      <SheetTabs />
      <StatusBar />
      <Taskbar />
    </div>
  )
}
